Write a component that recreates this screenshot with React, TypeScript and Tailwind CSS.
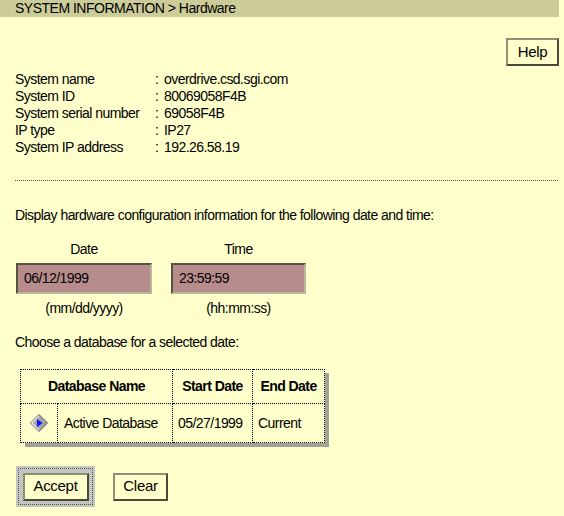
import React from "react";

const font = "font-['Liberation_Sans',Arial,sans-serif]";

function MotifButton({ label, w }: { label: string; w: string }) {
  return (
    <div
      className={`${w} h-[28px] flex items-center justify-center bg-[#ffffcc] border-2 border-t-[#8e8e76] border-l-[#8e8e76] border-b-[#4a4a3c] border-r-[#4a4a3c] text-[15px] tracking-[-0.3px] text-black`}
    >
      {label}
    </div>
  );
}

function Diamond() {
  return (
    <svg width="18" height="18" viewBox="0 0 18 18">
      <polygon points="9,0.5 17.5,9 9,17.5 0.5,9" fill="#a4a4a4" stroke="#5e5e5e" strokeWidth="1" />
      <polyline points="9,1.8 1.8,9 9,16.2" fill="none" stroke="#ececec" strokeWidth="1.2" />
      <polygon points="7,5 12.5,9 7,13" fill="#1414ff" />
    </svg>
  );
}

export default function App() {
  const info: [string, string][] = [
    ["System name", "overdrive.csd.sgi.com"],
    ["System ID", "80069058F4B"],
    ["System serial number", "69058F4B"],
    ["IP type", "IP27"],
    ["System IP address", "192.26.58.19"],
  ];
  const cell = "border border-dotted border-black";
  return (
    <div className={`w-[564px] h-[516px] bg-[#ffffcc] overflow-hidden text-black ${font} text-[14px] tracking-[-0.55px]`}>
      <div className="w-[559px] h-[17px] bg-[#cccc99] pl-[15px] leading-[17px] text-[14px] tracking-[-0.5px]">
        SYSTEM INFORMATION &gt; Hardware
      </div>

      <div className="flex justify-end pr-[5px] mt-[21px]">
        <MotifButton label="Help" w="w-[53px]" />
      </div>

      <div className="mt-[5px] pl-[15px]">
        {info.map(([k, v]) => (
          <div key={k} className="flex h-[17px] leading-[17px]">
            <div className="w-[140px]">{k}</div>
            <div className="w-[9px]">:</div>
            <div>{v}</div>
          </div>
        ))}
      </div>

      <div className="ml-[15px] mr-[6px] mt-[24px] border-t border-dotted border-[#555]" />

      <div className="pl-[15px] mt-[26px] h-[17px] leading-[17px]">
        Display hardware configuration information for the following date and time:
      </div>

      <div className="flex pl-[16px] mt-[17px] gap-[19px]">
        {[
          ["Date", "06/12/1999", "(mm/dd/yyyy)", "w-[136px]"],
          ["Time", "23:59:59", "(hh:mm:ss)", "w-[135px]"],
        ].map(([lab, val, fmt, w]) => (
          <div key={lab} className={`${w} flex flex-col items-center`}>
            <div className="h-[17px] leading-[17px]">{lab}</div>
            <div className="mt-[5px] w-full h-[31px] bg-[#b88c8c] border-2 border-t-[#55553f] border-l-[#55553f] border-b-[#b8b89a] border-r-[#b8b89a] flex items-center pl-[6px]">
              <span>{val}</span>
            </div>
            <div className="mt-[6px] h-[17px] leading-[17px]">{fmt}</div>
          </div>
        ))}
      </div>

      <div className="pl-[15px] mt-[17px] h-[17px] leading-[17px]">Choose a database for a selected date:</div>

      <div className="ml-[20px] mt-[18px] w-[304px] shadow-[5px_4px_0_#a2a29a]">
        <table className="w-[304px] table-fixed border-collapse border border-dotted border-black bg-[#ffffcc]">
          <colgroup>
            <col className="w-[37px]" />
            <col className="w-[115px]" />
            <col className="w-[80px]" />
            <col className="w-[72px]" />
          </colgroup>
          <thead>
            <tr className="h-[34px]">
              <th colSpan={2} className={`${cell} font-bold text-center`}>
                Database Name
              </th>
              <th className={`${cell} font-bold text-center`}>Start Date</th>
              <th className={`${cell} font-bold text-center`}>End Date</th>
            </tr>
          </thead>
          <tbody>
            <tr className="h-[39px]">
              <td className={cell}>
                <div className="flex justify-center">
                  <Diamond />
                </div>
              </td>
              <td className={`${cell} pl-[6px]`}>Active Database</td>
              <td className={`${cell} pl-[5px]`}>05/27/1999</td>
              <td className={`${cell} pl-[5px]`}>Current</td>
            </tr>
          </tbody>
        </table>
      </div>

      <div className="flex items-center pl-[16px] mt-[23px] gap-[18px]">
        <div className="w-[79px] h-[41px] bg-[#c4c4c0] p-[2px]">
          <div className="w-full h-full border border-dotted border-[#555] flex items-center justify-center">
            <MotifButton label="Accept" w="w-[66px]" />
          </div>
        </div>
        <MotifButton label="Clear" w="w-[55px]" />
      </div>
    </div>
  );
}
